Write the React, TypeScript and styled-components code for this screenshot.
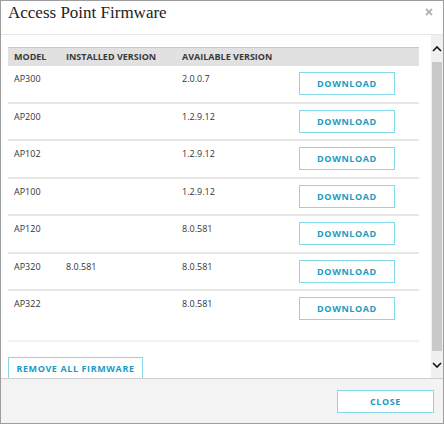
import React from "react";
import styled, { createGlobalStyle } from "styled-components";

const GlobalStyle = createGlobalStyle`
  body {
    margin: 0;
    background: #fff;
    font-family: "Open Sans", "Liberation Sans", sans-serif;
  }
`;

const firmware = [
  { model: "AP300", installed: "", available: "2.0.0.7" },
  { model: "AP200", installed: "", available: "1.2.9.12" },
  { model: "AP102", installed: "", available: "1.2.9.12" },
  { model: "AP100", installed: "", available: "1.2.9.12" },
  { model: "AP120", installed: "", available: "8.0.581" },
  { model: "AP320", installed: "8.0.581", available: "8.0.581" },
  { model: "AP322", installed: "", available: "8.0.581" },
];

const Chevron = ({ up }: { up?: boolean }) => (
  <svg width="10" height="6" viewBox="0 0 10 6">
    <path
      d={up ? "M1 5 L5 1 L9 5" : "M1 1 L5 5 L9 1"}
      fill="none"
      stroke="#111"
      strokeWidth="1.6"
    />
  </svg>
);

const App = () => {
  return (
    <>
      <GlobalStyle />
      <Dialog>
        <Header>
          <Title>Access Point Firmware</Title>
          <CloseX aria-label="close">
            <svg width="8" height="8" viewBox="0 0 8 8">
              <path d="M1 1 L7 7 M7 1 L1 7" stroke="#b3b3b3" strokeWidth="1.8" />
            </svg>
          </CloseX>
        </Header>

        <Body>
          <Content>
            <HeadRow>
              <HeadCell>Model</HeadCell>
              <HeadCell>Installed Version</HeadCell>
              <HeadCell>Available Version</HeadCell>
              <HeadCell />
            </HeadRow>
            {firmware.map((fw, i) => (
              <Row key={fw.model} $last={i === firmware.length - 1}>
                <Cell>{fw.model}</Cell>
                <Cell>{fw.installed}</Cell>
                <Cell>{fw.available}</Cell>
                <Cell>
                  <OutlineButton $width={96}>Download</OutlineButton>
                </Cell>
              </Row>
            ))}
            <TableEnd />
            <OutlineButton $width={135}>Remove All Firmware</OutlineButton>
          </Content>

          <Scrollbar>
            <ArrowBox>
              <Chevron up />
            </ArrowBox>
            <Thumb />
            <ArrowBox>
              <Chevron />
            </ArrowBox>
          </Scrollbar>
        </Body>

        <Footer>
          <OutlineButton $width={97}>Close</OutlineButton>
        </Footer>
      </Dialog>
    </>
  );
};

const Dialog = styled.div`
  width: 444px;
  height: 424px;
  box-sizing: border-box;
  border: 1px solid #9d9d9d;
  display: flex;
  flex-direction: column;
  background: #fff;
  overflow: hidden;
`;

const Header = styled.div`
  height: 34px;
  box-sizing: border-box;
  border-bottom: 1px solid #e6e6e6;
  display: flex;
  justify-content: space-between;
  align-items: flex-start;
  padding: 2px 10px 0 7px;
  flex-shrink: 0;
`;

const Title = styled.h1`
  margin: 0;
  font-family: "Liberation Serif", "Times New Roman", serif;
  font-weight: normal;
  font-size: 17px;
  line-height: 20px;
  color: #222;
`;

const CloseX = styled.span`
  display: flex;
  margin-top: 5px;
`;

const Body = styled.div`
  flex: 1;
  display: flex;
  min-height: 0;
  overflow: hidden;
`;

const Content = styled.div`
  flex: 1;
  padding: 12px 12px 0 7px;
  overflow: hidden;
`;

const Grid = styled.div`
  display: grid;
  grid-template-columns: 52px 116px 117px 1fr;
  padding-left: 6px;
`;

const HeadRow = styled(Grid)`
  height: 19px;
  box-sizing: border-box;
  border-top: 1px solid #c9c9c9;
  background: #e1e1e1;
  align-items: center;
`;

const HeadCell = styled.div`
  font-size: 9px;
  font-weight: 700;
  text-transform: uppercase;
  color: #3a3a3a;
  line-height: 12px;
`;

const Row = styled(Grid)<{ $last?: boolean }>`
  height: 37.5px;
  box-sizing: border-box;
  border-bottom: ${(p) => (p.$last ? "none" : "2px solid #e6e6e6")};
  align-items: flex-start;
  padding-top: 6px;
`;

const Cell = styled.div`
  font-size: 9px;
  line-height: 12px;
  color: #333;
  padding-top: 1px;

  &:last-child {
    padding-top: 0;
  }
`;

const TableEnd = styled.div`
  height: 11.5px;
  border-bottom: 2px solid #f2f2f2;
  margin-bottom: 13px;
`;

const OutlineButton = styled.button<{ $width: number }>`
  width: ${(p) => p.$width}px;
  height: 23px;
  box-sizing: border-box;
  background: #fff;
  border: 1px solid #84d8e8;
  border-radius: 0;
  padding: 0;
  font-family: "Open Sans", "Liberation Sans", sans-serif;
  font-size: 9px;
  font-weight: 700;
  letter-spacing: 0.6px;
  text-transform: uppercase;
  color: #1a9cc3;
  cursor: pointer;
`;

const Scrollbar = styled.div`
  width: 12px;
  background: #f0f0f0;
  display: flex;
  flex-direction: column;
  flex-shrink: 0;
`;

const ArrowBox = styled.div`
  height: 27px;
  display: flex;
  align-items: center;
  justify-content: center;
`;

const Thumb = styled.div`
  flex: 1;
  margin: 0 1px;
  background: #c9c9c9;
`;

const Footer = styled.div`
  height: 45px;
  box-sizing: border-box;
  border-top: 1px solid #cfcfcf;
  background: #f3f3f3;
  display: flex;
  justify-content: flex-end;
  align-items: flex-start;
  padding: 11px 9px 0 0;
  flex-shrink: 0;
`;

export default App;
